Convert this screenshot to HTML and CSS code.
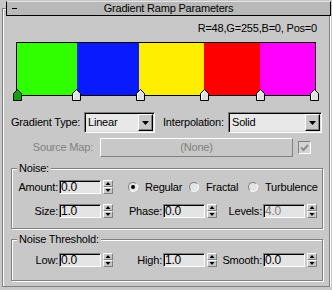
FILE: index.html
```html
<!DOCTYPE html>
<html lang="en">
  <head>
    <meta charset="UTF-8" />
    <meta name="viewport" content="width=device-width, initial-scale=1.0" />
    <title>Gradient Ramp Parameters</title>
    <link rel="stylesheet" href="styles.css">
  </head>
  <body>
    <svg class="defs" width="0" height="0">
      <symbol id="flag" viewBox="0 0 9 12">
        <path d="M.5 11.5V4.5L4.5 .5L8.5 4.5V11.5Z" fill="currentColor" stroke="#000" />
        <path d="M1.5 10.5V5L4.5 2" fill="none" style="stroke: var(--flag-hi)" />
      </symbol>
    </svg>

    <div class="rollout">
      <div class="rollout-title">
        <span class="collapse"></span>
        <span>Gradient Ramp Parameters</span>
      </div>

      <div class="readout">R=48,G=255,B=0, Pos=0</div>

      <!-- gradient bar with its flags -->
      <div class="ramp">
        <svg class="flag flag-active" style="left: -4px"><use href="#flag" /></svg>
        <svg class="flag" style="left: 55px"><use href="#flag" /></svg>
        <svg class="flag" style="left: 119px"><use href="#flag" /></svg>
        <svg class="flag" style="left: 183px"><use href="#flag" /></svg>
        <svg class="flag" style="left: 239px"><use href="#flag" /></svg>
        <svg class="flag" style="left: 293px"><use href="#flag" /></svg>
      </div>

      <div class="row-types">
        <span class="type-label">Gradient Type:</span>
        <div class="dropdown dropdown-type">
          <span class="dropdown-value">Linear</span>
          <span class="dropdown-btn"><b></b></span>
        </div>
        <span class="interp-label">Interpolation:</span>
        <div class="dropdown dropdown-interp">
          <span class="dropdown-value">Solid</span>
          <span class="dropdown-btn"><b></b></span>
        </div>
      </div>

      <div class="row-source">
        <span class="source-label disabled">Source Map:</span>
        <span class="map-btn disabled">(None)</span>
        <span class="check">
          <svg width="11" height="11" viewBox="0 0 11 11">
            <path d="M2 5.5L4.5 8L9 3" fill="none" stroke="#8c8c8c" stroke-width="2" />
          </svg>
        </span>
      </div>

      <!-- noise -->
      <div class="group group-noise">
        <span class="group-title">Noise:</span>
        <div class="spin-row">
          <span class="lbl lbl-1">Amount:</span>
          <span class="num">0.0</span>
          <span class="spin"><i class="up"></i><i class="down"></i></span>
          <div class="radios">
            <label class="radio-item"><span class="radio checked"></span>Regular</label>
            <label class="radio-item"><span class="radio"></span>Fractal</label>
            <label class="radio-item"><span class="radio"></span>Turbulence</label>
          </div>
        </div>
        <div class="spin-row">
          <span class="lbl lbl-1">Size:</span>
          <span class="num">1.0</span>
          <span class="spin"><i class="up"></i><i class="down"></i></span>
          <span class="lbl lbl-2">Phase:</span>
          <span class="num">0.0</span>
          <span class="spin"><i class="up"></i><i class="down"></i></span>
          <span class="lbl lbl-3">Levels:</span>
          <span class="num disabled">4.0</span>
          <span class="spin"><i class="up"></i><i class="down"></i></span>
        </div>
      </div>

      <div class="group group-threshold">
        <span class="group-title">Noise Threshold:</span>
        <div class="spin-row">
          <span class="lbl lbl-1">Low:</span>
          <span class="num">0.0</span>
          <span class="spin"><i class="up"></i><i class="down"></i></span>
          <span class="lbl lbl-2">High:</span>
          <span class="num">1.0</span>
          <span class="spin"><i class="up"></i><i class="down"></i></span>
          <span class="lbl lbl-3">Smooth:</span>
          <span class="num">0.0</span>
          <span class="spin"><i class="up"></i><i class="down"></i></span>
        </div>
      </div>
    </div>
  </body>
</html>
```

FILE: styles.css
```css
body {
  margin: 0;
  background: #c8c8c8;
  color: #000;
  font: 11px/13px "Liberation Sans", Arial, sans-serif;
  letter-spacing: -0.2px;
}
.defs {
  position: absolute;
}
.disabled {
  color: #808080;
}

/* rollout frame + title bar */
.rollout {
  box-sizing: border-box;
  width: 328px;
  height: 279px;
  margin: 8px 0 0 2px;
  border: 1px solid #808080;
  box-shadow: inset 1px 1px 0 #fff, 1px 1px 0 #fff;
}
.rollout-title {
  box-sizing: border-box;
  display: grid;
  grid-template-columns: 20px 1fr 20px;
  align-items: center;
  width: 325px;
  height: 15px;
  margin: -8px 0 0 3px;
  background: #b8b8b8;
  border: 1px solid #000;
  border-top-color: #e4e4e4;
  text-align: center;
}
.collapse {
  width: 5px;
  height: 1px;
  margin-left: 5px;
  background: #000;
}
.readout {
  margin: 6px 12px 0 0;
  text-align: right;
}

/* gradient bar */
.ramp {
  position: relative;
  box-sizing: border-box;
  width: 300px;
  height: 54px;
  margin: 7px 0 0 13px;
  border: 1px solid #000;
  background: linear-gradient(to right,
    #30ff00 0 60px,
    #0a1aff 60px 122px,
    #ffee00 122px 187px,
    #ff0000 187px 243px,
    #ff00ff 243px);
}
.flag {
  position: absolute;
  top: 46px;
  width: 9px;
  height: 12px;
  color: #e0e0e0;
  --flag-hi: #fff;
}
.flag-active {
  color: #10a010;
  --flag-hi: #10a010;
}

/* dropdown rows */
.row-types {
  display: flex;
  align-items: center;
  height: 21px;
  margin: 16px 0 0 8px;
}
.type-label {
  width: 73px;
}
.interp-label {
  width: 65px;
  margin-left: 8px;
}
.dropdown {
  box-sizing: border-box;
  display: flex;
  height: 21px;
  padding: 1px;
  border: 1px solid;
  border-color: #808080 #fff #fff #808080;
  box-shadow: inset 1px 1px 0 #000, inset -1px -1px 0 #dcdcdc;
  background: #e8e8e8;
}
.dropdown-type {
  width: 71px;
}
.dropdown-interp {
  width: 94px;
}
.dropdown-value {
  flex: 1;
  padding-left: 2px;
  line-height: 17px;
}
.dropdown-btn {
  box-sizing: border-box;
  display: flex;
  align-items: center;
  justify-content: center;
  width: 15px;
  border: 1px solid;
  border-color: #fff #000 #000 #fff;
  box-shadow: inset -1px -1px 0 #808080;
  background: #c8c8c8;
}
.dropdown-btn b {
  width: 7px;
  height: 4px;
  margin-top: 1px;
  background: #000;
  clip-path: polygon(0 0, 100% 0, 50% 100%);
}

.row-source {
  display: flex;
  align-items: center;
  height: 19px;
  margin: 5px 0 0 8px;
}
.source-label {
  box-sizing: border-box;
  width: 89px;
  padding-right: 7px;
  text-align: right;
}
.map-btn {
  box-sizing: border-box;
  width: 193px;
  height: 19px;
  border: 1px solid;
  border-color: #fff #808080 #808080 #fff;
  line-height: 17px;
  text-align: center;
}
.check {
  box-sizing: border-box;
  display: flex;
  align-items: center;
  justify-content: center;
  width: 13px;
  height: 13px;
  margin-left: 5px;
  border: 1px solid;
  border-color: #808080 #fff #fff #808080;
  background: #d4d4d4;
}

/* group boxes */
.group {
  position: relative;
  box-sizing: border-box;
  width: 312px;
  margin-left: 8px;
  border: 1px solid #808080;
  box-shadow: inset 1px 1px 0 #fff, 1px 1px 0 #fff;
}
.group-noise {
  margin-top: 11px;
  padding: 11px 0 10px;
}
.group-threshold {
  margin-top: 10px;
  padding: 13px 0;
}
.group-title {
  position: absolute;
  top: -7px;
  left: 5px;
  padding: 0 2px;
  background: #c8c8c8;
}
.spin-row {
  display: flex;
  align-items: center;
  height: 14px;
}
.spin-row + .spin-row {
  margin-top: 10px;
}
.lbl {
  box-sizing: border-box;
  padding-right: 1px;
  text-align: right;
}
.lbl-1 {
  width: 47px;
}
.lbl-2 {
  width: 50px;
}
.lbl-3 {
  width: 46px;
}
.num {
  box-sizing: border-box;
  width: 42px;
  height: 14px;
  padding-left: 1px;
  border: 1px solid;
  border-color: #808080 #fff #fff #808080;
  box-shadow: inset 1px 1px 0 #000;
  background: #e4e4e4;
  font-size: 12px;
  line-height: 12px;
}
.spin {
  display: flex;
  flex-direction: column;
  width: 10px;
  height: 14px;
  margin-left: 2px;
}
.spin i {
  box-sizing: border-box;
  display: flex;
  align-items: center;
  justify-content: center;
  flex: 1;
  border: 1px solid;
  border-color: #fff #808080 #808080 #fff;
  background: #c8c8c8;
}
.spin i::after {
  content: "";
  width: 5px;
  height: 3px;
  background: #000;
}
.spin .up::after {
  clip-path: polygon(50% 0, 100% 100%, 0 100%);
}
.spin .down::after {
  clip-path: polygon(0 0, 100% 0, 50% 100%);
}

/* radio buttons */
.radios {
  display: grid;
  grid-template-columns: 61px 59px auto;
  margin-left: 15px;
}
.radio-item {
  display: flex;
  align-items: center;
  gap: 7px;
}
.radio {
  box-sizing: border-box;
  display: flex;
  align-items: center;
  justify-content: center;
  width: 10px;
  height: 10px;
  border-radius: 50%;
  border: 1px solid;
  border-color: #808080 #fff #fff #808080;
  background: #e4e4e4;
}
.radio.checked::after {
  content: "";
  width: 4px;
  height: 4px;
  border-radius: 50%;
  background: #000;
}
```
